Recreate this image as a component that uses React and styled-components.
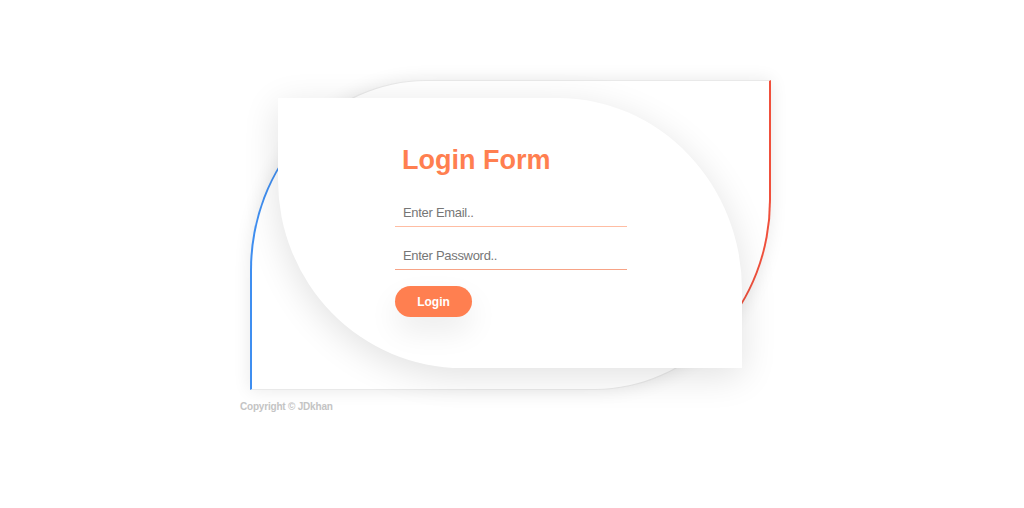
import React from 'react';
import styled, { createGlobalStyle } from 'styled-components';

const GlobalStyle = createGlobalStyle`
  body {
    margin: 0;
    background: #ffffff;
    font-family: 'Liberation Sans', Arial, sans-serif;
  }
`;

const Page = styled.div`
  padding: 80px 0 0 240px;
  min-height: 100vh;
  box-sizing: border-box;
`;

const Frame = styled.div`
  box-sizing: border-box;
  width: 521px;
  height: 310px;
  margin-left: 10px;
  padding: 17px 27px 21px 26px;
  border-top: 1px solid #e9e9e9;
  border-bottom: 1px solid #e9e9e9;
  border-left: 2px solid #3f8ef0;
  border-right: 2px solid #f0503c;
  border-radius: 176px 0 176px 0 / 190px 0 190px 0;
  box-shadow: 0 0 18px rgba(0, 0, 0, 0.09);
  background: #fff;
`;

const Leaf = styled.div`
  box-sizing: border-box;
  width: 464px;
  height: 270px;
  padding: 47px 0 0 117px;
  background: #fff;
  border-radius: 0 184px 0 184px / 0 192px 0 188px;
  box-shadow: 0 8px 36px rgba(0, 0, 0, 0.12);
`;

const Form = styled.form`
  display: flex;
  flex-direction: column;
  align-items: flex-start;
  width: 232px;
`;

const Title = styled.h2`
  margin: 0 0 21px;
  padding-left: 7px;
  font-size: 27px;
  font-weight: bold;
  color: #ff7f50;
`;

const Field = styled.input`
  box-sizing: border-box;
  width: 232px;
  margin-bottom: ${(p) => p.$gap}px;
  padding: 8px 8px 6px;
  border: none;
  border-bottom: 1px solid ${(p) => p.$line};
  outline: none;
  background: transparent;
  font-family: 'Liberation Sans', Arial, sans-serif;
  font-size: 13px;
  letter-spacing: -0.3px;
  color: #444;

  &::placeholder {
    color: #767676;
  }
`;

const Button = styled.button`
  width: 77px;
  height: 31px;
  border: none;
  border-radius: 16px;
  background: #ff7f50;
  color: #fff;
  font-family: 'Liberation Sans', Arial, sans-serif;
  font-size: 12px;
  font-weight: bold;
  box-shadow: 0 14px 30px rgba(0, 0, 0, 0.08);
  cursor: pointer;
`;

const Copyright = styled.p`
  margin: 11px 0 0;
  font-size: 10px;
  font-weight: bold;
  letter-spacing: -0.2px;
  color: #c4c4c4;
`;

export default function App() {
  return (
    <>
      <GlobalStyle />
      <Page>
        <Frame>
          <Leaf>
            <Form onSubmit={(e) => e.preventDefault()}>
              <Title>Login Form</Title>
              <Field type="email" placeholder="Enter Email.." $line="#ffbda3" $gap={13} />
              <Field type="password" placeholder="Enter Password.." $line="#f7a386" $gap={16} />
              <Button type="submit">Login</Button>
            </Form>
          </Leaf>
        </Frame>
        <Copyright>Copyright © JDkhan</Copyright>
      </Page>
    </>
  );
}
